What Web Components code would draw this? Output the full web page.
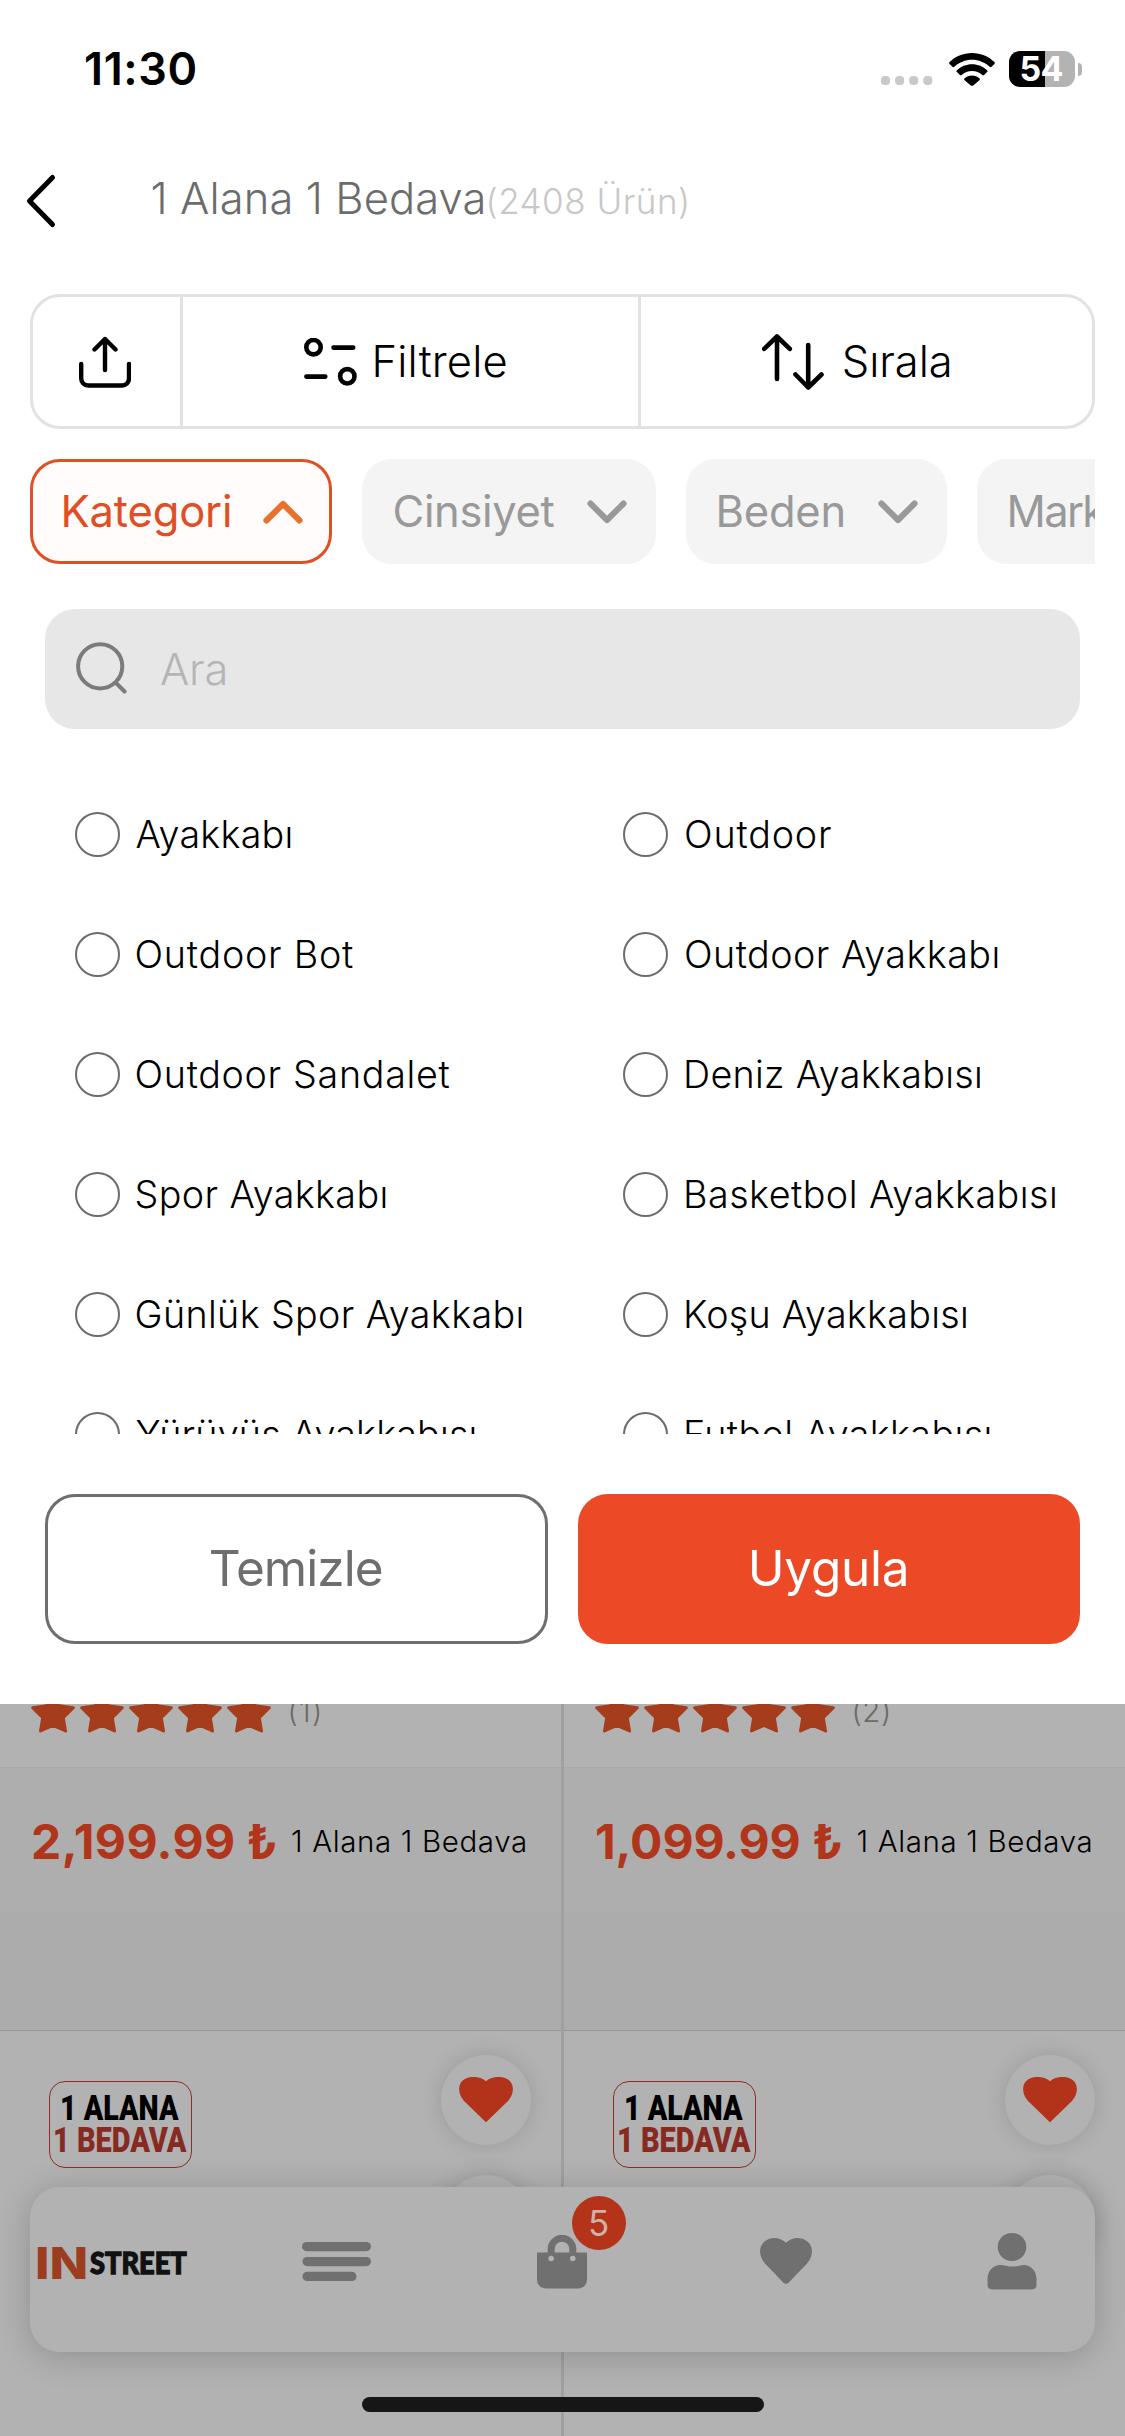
<!DOCTYPE html>
<html lang="tr">
<head>
<meta charset="utf-8">
<title>1 Alana 1 Bedava</title>
<style>
  html, body { margin: 0; background: #b2b2b2; }
  body { font-family: Inter, "Liberation Sans", sans-serif; color: #000; }
</style>
</head>
<body>
<shop-page></shop-page>
<script>
const define = (name, html, setup) => customElements.define(name, class extends HTMLElement {
  connectedCallback() {
    if (this.shadowRoot) return;
    const root = this.attachShadow({ mode: 'open' });
    root.innerHTML = typeof html === 'function' ? html(this) : html;
    if (setup) setup(this, root);
  }
});

// One line of text whose glyphs span exactly the "w" attribute, by tracking or by horizontal scaling.
const ctx = document.createElement('canvas').getContext('2d');
define('fit-text', `<style>
  :host { display: block; white-space: nowrap; flex: none; line-height: 1.2; }
  span { display: inline-block; transform-origin: 0 50%; }
</style><span><slot></slot></span>`, (el, root) => {
  const s = el.getAttribute('size'), wt = el.getAttribute('weight') || 400, w = +el.getAttribute('w');
  el.style.fontSize = s + 'px';
  el.style.fontWeight = wt;
  if (el.hasAttribute('color')) el.style.color = el.getAttribute('color');
  if (el.hasAttribute('family')) el.style.fontFamily = el.getAttribute('family');
  el.style.width = w + 'px';
  const text = el.textContent, span = root.querySelector('span');
  ctx.font = `${wt} ${s}px ${getComputedStyle(el).fontFamily}`;
  const m = ctx.measureText(text), ink = m.actualBoundingBoxLeft + m.actualBoundingBoxRight;
  if (el.hasAttribute('stretch')) {
    const k = w / ink;
    span.style.transform = `scaleX(${k})`;
    span.style.marginLeft = m.actualBoundingBoxLeft * k + 'px';
  } else {
    span.style.marginLeft = m.actualBoundingBoxLeft + 'px';
    if (text.length > 1) span.style.letterSpacing = (w - ink) / (text.length - 1) + 'px';
  }
});

const heart = 'M27 45.3 L5 24 C-2 16 -1 6 5 2.5 C12-1.5 21-.8 27 4.2 C33-.8 42-1.5 49 2.5 C55 6 56 16 49 24 Z';
const line = (w) => `fill="none" stroke="currentColor" stroke-width="${w}" stroke-linecap="round" stroke-linejoin="round"`;
const ICONS = {
  cell: [52, 9, `<g fill="#c9c9c9"><rect width="9" height="9" rx="3.800"/><rect x="14.100" width="9" height="9" rx="3.800"/><rect x="28.200" width="9" height="9" rx="3.800"/><rect x="42.300" width="9" height="9" rx="3.800"/></g>`],
  wifi: [46, 33, `<path d="M23 0C32 0 40 3.600 45.400 9.100c.6.600.6 1.300 0 1.900l-2.800 2.800c-.6.600-1.300.6-1.900 0C36 9.500 29.800 6.800 23 6.800S10 9.500 5.300 13.800c-.6.600-1.300.6-1.900 0L.6 11c-.6-.6-.6-1.300 0-1.900C6 3.600 14 0 23 0zM23 11.200c5.900 0 11.200 2.300 15.100 6 .6.600.6 1.300 0 1.900l-3 3c-.5.500-1.200.5-1.800 0A15 15 0 0 0 23 18a15 15 0 0 0-10.300 4.100c-.6.500-1.300.5-1.800 0l-3-3c-.6-.6-.6-1.300 0-1.900 3.900-3.700 9.200-6 15.100-6zM23 22.400c2.900 0 5.500 1.100 7.400 2.900.6.600.6 1.300 0 1.900l-6.200 5.200c-.7.600-1.700.6-2.400 0l-6.200-5.200c-.6-.6-.6-1.300 0-1.900 1.900-1.800 4.500-2.900 7.400-2.900z" fill="currentColor"/>`],
  back: [34, 56, `<path d="M28.500 4.500 L5.500 28 L28.500 51.500" ${line(5)}/>`],
  share: [52, 52, `<path d="M2.200 28V42.500a7 7 0 0 0 7 7H43a7 7 0 0 0 7-7V28M26 34V3M15.500 13.500L26 3l10.500 10.500" ${line(4.4)}/>`],
  filter: [53, 48, `<g ${line(4.600)}><circle cx="9.500" cy="9.200" r="7.200"/><circle cx="43.300" cy="38.300" r="7.200"/><path d="M29.500 9.600H49.200M2.400 38.600H21.300"/></g>`],
  sort: [62, 56, `<path d="M15 45V2.500M2.200 14.800L15 2.500l12.800 12.300M46.200 11v42.500M33.500 40.500L46.200 53.500 59.500 40.500" ${line(4.600)}/>`],
  up: [40, 24, `<path d="M3.400 20.500 L20 4 L36.600 20.500" ${line(6)}/>`],
  down: [40, 24, `<path d="M3.400 3.500 L20 20 L36.600 3.500" ${line(6)}/>`],
  search: [51, 52, `<g ${line(4)}><circle cx="24.200" cy="24.300" r="22.100"/><path d="M39.500 40.500 L48.600 49.500"/></g>`],
  star: [44, 42, `<path d="M22 2l6.400 12.800 13.900 1.900-10 10 2.200 13.300L22 34.300 9.500 40l2.200-13.300-10-10 13.900-1.900z" fill="currentColor" stroke="currentColor" stroke-width="3" stroke-linejoin="round"/>`],
  heart: [54, 45.500, `<path d="${heart}" fill="currentColor"/>`],
  menu: [69, 39, `<g fill="currentColor"><rect width="69" height="9.200" rx="4.600"/><rect x=".5" y="15" width="68.500" height="9.200" rx="4.600"/><rect x=".5" y="29.800" width="54" height="9.200" rx="4.600"/></g>`],
  bag: [50, 54, `<path d="M0 17.500H50V45a8.500 8.500 0 0 1-8.500 8.500H8.500A8.500 8.500 0 0 1 0 45z" fill="currentColor"/><path d="M14.200 23V14a10.800 10.800 0 0 1 21.600 0v9" fill="none" stroke="currentColor" stroke-width="7"/><circle cx="14.200" cy="23.500" r="2.800" fill="#b2b2b2"/><circle cx="35.800" cy="23.500" r="2.800" fill="#b2b2b2"/>`],
  like: [52, 46, `<path d="M23.200 44.600 L5 25.500 C-1.500 18 -1.500 8.500 4.500 3.500 C11-1.500 20-1 26 4.800 C32-1 41-1.500 47.500 3.500 C53.500 8.500 53.500 18 47 25.500 L28.800 44.600 Q26 47 23.200 44.600Z" fill="currentColor"/>`],
  user: [50, 57, `<ellipse cx="25" cy="14" rx="14.300" ry="14" fill="currentColor"/><path d="M13.500 32c3.500 0 6 1.600 11.500 1.600S33 32 36.500 32C44.500 32 49.500 38.500 49.500 46v5.500c0 3-1.800 5-4.500 5H5c-2.700 0-4.500-2-4.500-5V46C.5 38.500 5.500 32 13.500 32z" fill="currentColor"/>`]
};
define('ui-icon', el => {
  const [w, h, body] = ICONS[el.getAttribute('name')];
  return `<style>:host{display:block;flex:none;width:${w}px;height:${h}px}svg{display:block}</style>
  <svg width="${w}" height="${h}" viewBox="0 0 ${w} ${h}">${body}</svg>`;
});

define('status-bar', `<style>
  :host { display: flex; height: 138px; box-sizing: border-box; padding: 0 43px 0 86px; align-items: center; }
  .right { margin-left: auto; display: flex; align-items: center; }
  ui-icon[name=cell] { margin: 22px 15.500px 0 0; }
  .batt { width: 66px; height: 36px; border-radius: 11px; margin-left: 14.500px; display: flex; align-items: center; justify-content: center;
    background: linear-gradient(90deg, #000 36px, #b3b3b3 36px); }
  .nub { width: 4px; height: 13px; margin-left: 3px; border-radius: 0 5px 5px 0; background: #b3b3b3; }
</style>
<fit-text w="109.500" size="45" weight="600">11:30</fit-text>
<div class="right"><ui-icon name="cell"></ui-icon><ui-icon name="wifi"></ui-icon>
<div class="batt"><fit-text w="41" size="34" weight="700" color="#fff">54</fit-text></div><div class="nub"></div></div>`);

define('page-header', `<style>
  :host { display: flex; height: 125px; align-items: center; margin-bottom: 31px; padding-left: 24px; }
  .t { display: flex; align-items: baseline; gap: 5px; margin: 0 0 4px 94.500px; }
</style><ui-icon name="back"></ui-icon><div class="t"><fit-text w="331" size="43.500" weight="300" color="#6c6c6c">1 Alana 1 Bedava</fit-text><fit-text w="198.500" size="35" weight="300" color="#c8c8c8">(2408 Ürün)</fit-text></div>`);

define('tool-bar', `<style>
  :host { display: flex; height: 135px; box-sizing: border-box; margin: 0 30px; border: 3px solid #e2e2e2; border-radius: 30px; }
  div { display: flex; align-items: center; justify-content: center; box-sizing: border-box; }
  div + div { border-left: 3px solid #e2e2e2; }
  .s { width: 147px; padding-right: 4px; }
  .f { width: 458px; gap: 19px; padding-right: 12px; }
  .o { flex: 1; gap: 19.500px; padding-right: 21px; }
</style>
<div class="s"><ui-icon name="share"></ui-icon></div>
<div class="f"><ui-icon name="filter"></ui-icon><fit-text w="130" size="43.500" weight="300">Filtrele</fit-text></div>
<div class="o"><ui-icon name="sort"></ui-icon><fit-text w="106" size="43.500" weight="300">Sırala</fit-text></div>`);

define('filter-chip', `<style>
  :host { display: flex; flex: none; align-items: center; justify-content: space-between; height: 105px; box-sizing: border-box; border-radius: 30px;
    padding: 0 29.500px 0 32.500px; background: #f4f4f4; color: #999; }
  :host([open]) { background: #fffcfb; color: #df4f25; border: 3px solid #df5025; padding: 0 26.500px 0 30.500px; }
  ui-icon[name=up] { color: #e8722b; }
</style><slot></slot>`, (el, root) => {
  el.style.width = el.getAttribute('width') + 'px';
  const i = document.createElement('ui-icon');
  i.setAttribute('name', el.hasAttribute('open') ? 'up' : 'down');
  root.append(i);
});
define('chip-row', `<style>:host { display: flex; gap: 30px; margin: 30px 30px 0; overflow: hidden; }</style><slot></slot>`);

define('search-field', `<style>
  :host { display: flex; align-items: center; height: 120px; margin: 45px 45px 0; padding-left: 31px; box-sizing: border-box; border-radius: 30px; background: #e7e7e7; gap: 34px; }
  ui-icon { color: #7b7b7b; margin-bottom: 3px; }
</style><ui-icon name="search"></ui-icon><fit-text w="64.500" size="43.500" weight="300" color="#b5b5b5">Ara</fit-text>`);

define('radio-option', el => `<style>
  :host { display: flex; align-items: center; height: 120px; gap: 16.500px; }
  :host(:nth-of-type(even)) { gap: 18px; }
  i { width: 45px; height: 45px; box-sizing: border-box; border: 2.200px solid #6c6c6c; border-radius: 50%; flex: none; }
</style><i></i><fit-text w="${el.getAttribute('w')}" size="37.700" weight="300">${el.getAttribute('label')}</fit-text>`);

const OPTIONS = [['Ayakkabı', 154], ['Outdoor', 145], ['Outdoor Bot', 216.500], ['Outdoor Ayakkabı', 311.500],
  ['Outdoor Sandalet', 313], ['Deniz Ayakkabısı', 294], ['Spor Ayakkabı', 249], ['Basketbol Ayakkabısı', 369],
  ['Günlük Spor Ayakkabı', 385], ['Koşu Ayakkabısı', 280], ['Yürüyüş Ayakkabısı', 338], ['Futbol Ayakkabısı', 303.500]];
define('option-list', `<style>
  :host { display: grid; grid-template-columns: 548px 1fr; grid-auto-rows: 120px; height: 705px; box-sizing: border-box; padding: 45.500px 0 0 75px; overflow: hidden; }
</style>` + OPTIONS.map(([t, w]) => `<radio-option label="${t}" w="${w}"></radio-option>`).join(''));

define('action-button', `<style>
  :host { display: flex; flex: 1; height: 150px; box-sizing: border-box; align-items: center; justify-content: center; border-radius: 30px; border: 3px solid #6e6e6e; color: #6e6e6e; }
  :host([primary]) { border-color: #ec4a26; background: #ec4a26; color: #fff; }
</style><slot></slot>`);

define('filter-panel', `<style>
  :host { display: block; height: 1704px; background: #fff; overflow: hidden; flex: none; }
  .actions { display: flex; gap: 30px; padding: 60px 45px; }
</style>
<status-bar></status-bar><page-header></page-header><tool-bar></tool-bar>
<chip-row>
  <filter-chip open width="302"><fit-text w="166.500" size="43.500">Kategori</fit-text></filter-chip>
  <filter-chip width="294"><fit-text w="160" size="43.500">Cinsiyet</fit-text></filter-chip>
  <filter-chip width="261"><fit-text w="125" size="43.500">Beden</fit-text></filter-chip>
  <filter-chip width="254"><fit-text w="117" size="43.500">Marka</fit-text></filter-chip>
</chip-row>
<search-field></search-field><option-list></option-list>
<div class="actions"><action-button><fit-text w="171" size="49.500" weight="400">Temizle</fit-text></action-button><action-button primary><fit-text w="154" size="49.500" weight="400">Uygula</fit-text></action-button></div>`);

define('product-card', el => `<style>
  :host { display: block; flex: none; box-sizing: border-box; width: 561px; }
  .rate { display: flex; gap: 5px; height: 63px; color: #a53d1c; padding-left: 31px; }
  .rate ui-icon { margin-top: -13.500px; }
  .rate fit-text { margin: -10.500px 0 0 14.500px; height: 35px; }
  .price { display: flex; align-items: center; height: 145px; box-sizing: border-box; padding: 3px 0 0 33px; background: #aeaeae; border-top: 1px solid #a9a9a9; }
  .pad { height: 119px; background: #acacac; border-bottom: 1px solid #979797; box-sizing: border-box; }
  .next { display: flex; justify-content: space-between; padding: 50px 30.500px 0 49px; }
  .promo { width: 143px; height: 87px; box-sizing: border-box; border: 1.300px solid #8e2d25; border-radius: 16px; display: flex; flex-direction: column; align-items: center; padding-top: 11px; }
  .promo fit-text { line-height: 32px; }
  .round { width: 90px; height: 90px; border-radius: 50%; background: #b2b2b2; box-shadow: 0 0 22px rgba(0,0,0,.14); display: flex; align-items: center; justify-content: center; margin: -26.500px 0 56.500px; color: #b23319; }
</style>
<div class="rate">${'<ui-icon name="star"></ui-icon>'.repeat(5)}<fit-text w="${el.getAttribute('nw')}" size="29.500" weight="300" color="#6a6a6a">(${el.getAttribute('count')})</fit-text></div>
<div class="price"><fit-text w="${el.getAttribute('pw')}" size="48" weight="700" color="#b0351a">${el.getAttribute('price')}</fit-text><fit-text style="margin-left:15.500px" w="27.500" size="48" weight="700" color="#b0351a">₺</fit-text><fit-text style="margin-left:16px" w="233" size="29.500" weight="300">1 Alana 1 Bedava</fit-text></div>
<div class="pad"></div>
<div class="next"><div class="promo"><fit-text stretch w="117" size="35" weight="900" family="Roboto">1 ALANA</fit-text><fit-text stretch w="132" size="35" weight="900" family="Roboto" color="#862a22">1 BEDAVA</fit-text></div>
<div><div class="round"><ui-icon name="heart"></ui-icon></div><div class="round"></div></div></div>`);

define('product-list', `<style>
  :host { display: flex; flex: 1; overflow: hidden; background: #b2b2b2; }
  i { width: 3px; background: #a0a0a0; flex: none; }
</style><product-card count="1" nw="29.500" price="2,199.99" pw="200"></product-card><i></i><product-card count="2" nw="34.500" price="1,099.99" pw="201.500"></product-card>`);

define('bottom-nav', `<style>
  :host { position: absolute; left: 30px; right: 30px; bottom: 84px; height: 165px; border-radius: 30px; background: #b2b2b2; box-shadow: 0 4px 34px rgba(0,0,0,.2);
    display: flex; align-items: center; color: #707070; box-sizing: border-box; padding: 0 58.500px 0 7px; }
  .logo { display: flex; align-items: baseline; gap: 4px; margin-bottom: 12px; }
  .st { transform: translateY(-5px); -webkit-text-stroke: 1.300px #111; }
  ui-icon { margin-bottom: 17px; }
  .bag { position: relative; margin-left: 166px; }
  .bag ui-icon { margin-bottom: 16px; }
  .count { position: absolute; left: 35px; top: -39px; width: 54px; height: 54px; border-radius: 50%; background: #b43319; display: flex; align-items: center; justify-content: center; }
</style>
<div class="logo"><fit-text stretch w="48.500" size="44.500" weight="800" color="#9b3d1e">IN</fit-text><fit-text class="st" stretch w="97" size="31" weight="900" family="Lato" color="#111">STREET</fit-text></div>
<ui-icon name="menu" style="margin-left:115.500px;margin-bottom:16px"></ui-icon>
<div class="bag"><ui-icon name="bag"></ui-icon><div class="count"><fit-text w="18" size="35" weight="400" color="#d2b0a8">5</fit-text></div></div>
<ui-icon name="like" style="margin-left:173px"></ui-icon>
<ui-icon name="user" style="margin-left:auto"></ui-icon>`);

define('home-indicator', `<style>:host { position: absolute; left: 361.500px; width: 402px; bottom: 24px; height: 15px; border-radius: 8px; background: #161616; }</style>`);

define('shop-page', `<style>
  :host { position: relative; display: flex; flex-direction: column; width: 1125px; height: 2436px; overflow: hidden; }
</style><filter-panel></filter-panel><product-list></product-list><bottom-nav></bottom-nav><home-indicator></home-indicator>`);
</script>
</body>
</html>
